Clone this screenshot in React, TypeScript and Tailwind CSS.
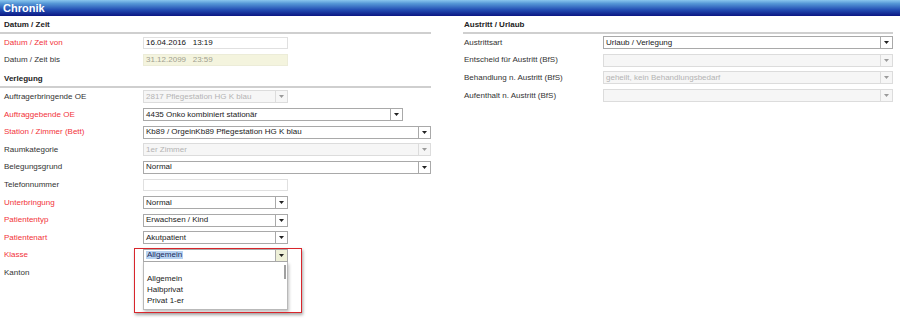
import React from 'react';

type Ctl =
  | { kind: 'input'; value?: string; width: string; tone?: 'normal' | 'beige' }
  | { kind: 'select'; value?: string; width: string; disabled?: boolean; open?: boolean }
  | { kind: 'none' };

type Row = { label: string; red?: boolean; ctl: Ctl };

const leftTop: Row[] = [
  { label: 'Datum / Zeit von', red: true, ctl: { kind: 'input', value: '16.04.2016\u00a0\u00a0\u00a013:19', width: 'w-[145px]' } },
  { label: 'Datum / Zeit bis', ctl: { kind: 'input', value: '31.12.2099\u00a0\u00a0\u00a023:59', width: 'w-[145px]', tone: 'beige' } },
];

const leftBottom: Row[] = [
  { label: 'Auftragerbringende OE', ctl: { kind: 'select', value: '2817 Pflegestation HG K blau', width: 'w-[145px]', disabled: true } },
  { label: 'Auftraggebende OE', red: true, ctl: { kind: 'select', value: '4435 Onko kombiniert stationär', width: 'w-[260px]' } },
  { label: 'Station / Zimmer (Bett)', red: true, ctl: { kind: 'select', value: 'Kb89 / OrgeinKb89 Pflegestation HG K blau', width: 'w-[289px]' } },
  { label: 'Raumkategorie', ctl: { kind: 'select', value: '1er Zimmer', width: 'w-[289px]', disabled: true } },
  { label: 'Belegungsgrund', ctl: { kind: 'select', value: 'Normal', width: 'w-[289px]' } },
  { label: 'Telefonnummer', ctl: { kind: 'input', width: 'w-[145px]' } },
  { label: 'Unterbringung', red: true, ctl: { kind: 'select', value: 'Normal', width: 'w-[145px]' } },
  { label: 'Patiententyp', red: true, ctl: { kind: 'select', value: 'Erwachsen / Kind', width: 'w-[145px]' } },
  { label: 'Patientenart', red: true, ctl: { kind: 'select', value: 'Akutpatient', width: 'w-[145px]' } },
  { label: 'Klasse', red: true, ctl: { kind: 'select', value: 'Allgemein', width: 'w-[145px]', open: true } },
  { label: 'Kanton', ctl: { kind: 'none' } },
];

const right: Row[] = [
  { label: 'Austrittsart', ctl: { kind: 'select', value: 'Urlaub / Verlegung', width: 'w-[291px]' } },
  { label: 'Entscheid für Austritt (BfS)', ctl: { kind: 'select', width: 'w-[291px]', disabled: true } },
  { label: 'Behandlung n. Austritt (BfS)', ctl: { kind: 'select', value: 'geheilt, kein Behandlungsbedarf', width: 'w-[291px]', disabled: true } },
  { label: 'Aufenthalt n. Austritt (BfS)', ctl: { kind: 'select', width: 'w-[291px]', disabled: true } },
];

function Arrow({ disabled }: { disabled?: boolean }) {
  return (
    <svg width="5" height="3" viewBox="0 0 5 3">
      <path d="M0 0H5L2.5 3Z" fill={disabled ? '#9a9a9a' : '#222'} />
    </svg>
  );
}

function Select({ c }: { c: Extract<Ctl, { kind: 'select' }> }) {
  return (
    <div className={`relative ${c.width}`}>
      <div
        className={`flex h-[13px] items-stretch border ${
          c.disabled ? 'border-[#dcdcdc] bg-[#f6f6f6] text-[#b4b4b4]' : 'border-[#a9a9a9] bg-white text-[#1a1a1a]'
        }`}
      >
        <div className="flex flex-1 items-center overflow-hidden whitespace-nowrap pl-[2px]">
          {c.open ? <span className="bg-[#b7d3f2] px-[1px] text-[#1b2b5a]">{c.value}</span> : c.value}
        </div>
        <div
          className={`flex w-[12px] items-center justify-center border-l ${
            c.disabled ? 'border-[#dcdcdc]' : 'border-[#a9a9a9]'
          } ${c.open ? 'bg-[#eef0d8]' : ''}`}
        >
          <Arrow disabled={c.disabled} />
        </div>
      </div>
      {c.open && (
        <>
          {/* open list */}
          <div className="absolute left-0 top-[13px] z-10 h-[48px] w-full border border-t-0 border-[#b9b9b9] bg-white shadow-[1px_2px_3px_rgba(0,0,0,0.25)]">
            <div className="absolute right-[1px] top-[3px] h-[14px] w-[2px] bg-[#a0a0a0]" />
            <div className="flex flex-col pl-[3px] pt-[11px] text-[#222] leading-[11px]">
              <span>Allgemein</span>
              <span>Halbprivat</span>
              <span>Privat 1-er</span>
            </div>
          </div>
          {/* red highlight frame */}
          <div className="absolute left-[-9px] top-[-1px] z-20 h-[65px] w-[168px] border-[1.5px] border-[#d8262c] shadow-[1px_2px_3px_rgba(0,0,0,0.35)]" />
        </>
      )}
    </div>
  );
}

function Control({ c }: { c: Ctl }) {
  if (c.kind === 'none') return null;
  if (c.kind === 'select') return <Select c={c} />;
  return (
    <div
      className={`flex h-[12px] items-center whitespace-nowrap border pl-[2px] ${c.width} ${
        c.tone === 'beige' ? 'border-[#ececd8] bg-[#f4f4de] text-[#a0a090]' : 'border-[#e0e0e0] bg-white text-[#111]'
      }`}
    >
      {c.value}
    </div>
  );
}

function FormRow({ row, labelCls }: { row: Row; labelCls: string }) {
  return (
    <div className="flex h-[17.6px] items-center">
      <div className={`${labelCls} shrink-0 ${row.red ? 'text-[#f2333a]' : 'text-[#333]'}`}>{row.label}</div>
      <Control c={row.ctl} />
    </div>
  );
}

function Section({ title, pad, h = 'h-[18px]' }: { title: string; pad: string; h?: string }) {
  return (
    <div className={`flex ${h} flex-col justify-end`}>
      <div className={`${pad} pb-[3px] font-bold text-[#222]`}>{title}</div>
      <div className="h-[2px] bg-[#cfcfcf]" />
    </div>
  );
}

export default function App() {
  return (
    <div
      className="h-[318px] w-[900px] overflow-hidden bg-white text-[8px] leading-none"
      style={{ fontFamily: '"Liberation Sans", Arial, sans-serif' }}
    >
      {/* Title bar */}
      <div className="flex h-[16px] items-center bg-[linear-gradient(to_bottom,#8ac6ee_0%,#5597d6_22%,#2450b4_60%,#0b1683_100%)] pl-[3px] text-[11px] font-bold text-white">
        Chronik
      </div>

      <div className="flex">
        {/* Left column */}
        <div className="w-[431px]">
          <Section title="Datum / Zeit" pad="pl-[4px]" />
          {leftTop.map((r) => (
            <FormRow key={r.label} row={r} labelCls="w-[143px] pl-[4px]" />
          ))}
          <Section title="Verlegung" pad="pl-[4px]" h="h-[19px]" />
          {leftBottom.map((r) => (
            <FormRow key={r.label} row={r} labelCls="w-[143px] pl-[4px]" />
          ))}
        </div>

        {/* Right column */}
        <div className="ml-[32px] w-[430px]">
          <Section title="Austritt / Urlaub" pad="pl-[1px]" />
          {right.map((r) => (
            <FormRow key={r.label} row={r} labelCls="w-[140px] pl-[1px]" />
          ))}
        </div>
      </div>
    </div>
  );
}
